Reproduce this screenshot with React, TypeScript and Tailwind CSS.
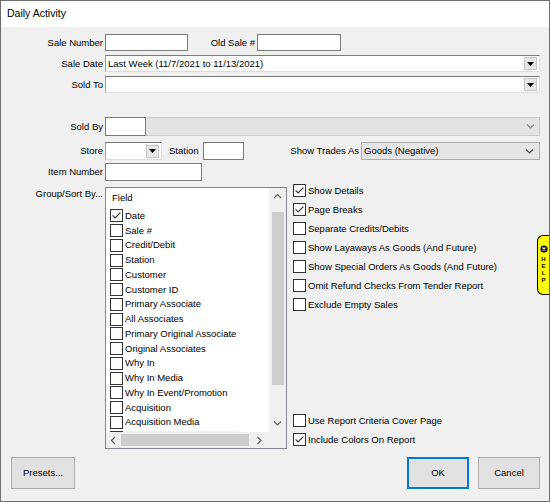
import React from "react"

const items: string[] = [
  "Date",
  "Sale #",
  "Credit/Debit",
  "Station",
  "Customer",
  "Customer ID",
  "Primary Associate",
  "All Associates",
  "Primary Original Associate",
  "Original Associates",
  "Why In",
  "Why In Media",
  "Why In Event/Promotion",
  "Acquisition",
  "Acquisition Media",
  "Acquisition Event",
]

const Check = ({ checked }: { checked?: boolean }) => (
  <svg width="13" height="13" viewBox="0 0 13 13" className="shrink-0">
    <rect x="0.5" y="0.5" width="12" height="12" fill="#ffffff" stroke="#333333" />
    {checked ? <path d="M2.6 6.4 L5.1 9 L10.4 3.6" fill="none" stroke="#333333" strokeWidth="1.2" /> : null}
  </svg>
)

const DropBtn = () => (
  <div className="w-[13px] h-[13px] mr-[2px] bg-[#e6e6e6] border border-[#c4c4c4] flex items-center justify-center shrink-0">
    <svg width="7" height="4" viewBox="0 0 7 4">
      <path d="M0 0 H7 L3.5 4 Z" fill="#000000" />
    </svg>
  </div>
)

const Chevron = ({ dir = "down", color = "#606060" }: { dir?: string; color?: string }) => {
  const d: { [k: string]: string } = {
    down: "M1 1.5 L4.5 5 L8 1.5",
    up: "M1 5 L4.5 1.5 L8 5",
    left: "M5 1 L1.5 4.5 L5 8",
    right: "M1.5 1 L5 4.5 L1.5 8",
  }
  const vert = dir === "down" || dir === "up"
  return (
    <svg width={vert ? 9 : 7} height={vert ? 7 : 9} viewBox={vert ? "0 0 9 7" : "0 0 7 9"}>
      <path d={d[dir]} fill="none" stroke={color} strokeWidth="1.2" />
    </svg>
  )
}

const Label = ({ text, w = "w-[104px]" }: { text: string; w?: string }) => (
  <div className={`${w} shrink-0 text-right pr-[2px] leading-[12px]`}>{text}</div>
)

const Input = ({ w }: { w: string }) => (
  <div className={`${w} h-full bg-white border border-[#7a7a7a] shrink-0`} />
)

const Combo = ({ text, w }: { text?: string; w: string }) => (
  <div className={`${w} h-full bg-white border border-[#a0a0a0] border-t-[#7a7a7a] border-r-[#dcdcdc] border-b-[#dcdcdc] flex items-center shrink-0`}>
    <div className="flex-1 pl-[2px] leading-[12px] whitespace-nowrap overflow-hidden">{text}</div>
    <DropBtn />
  </div>
)

const Opt = ({ text, checked }: { text: string; checked?: boolean }) => (
  <div className="h-[19px] flex items-center gap-[2px] whitespace-nowrap">
    <Check checked={checked} />
    <span className="leading-[12px]">{text}</span>
  </div>
)

const Button = ({ text, w, primary }: { text: string; w: string; primary?: boolean }) => (
  <div
    className={`${w} h-[32px] flex items-center justify-center bg-[#e1e1e1] ${
      primary ? "border-2 border-[#0078d7]" : "border border-[#adadad]"
    }`}
  >
    {text}
  </div>
)

const App: React.FC = () => {
  return (
    <div className="relative w-[550px] h-[502px] border border-[#6e6e6e] bg-[#f0f0f0] text-black text-[9.5px] font-['Liberation_Sans',Arial,sans-serif] flex flex-col overflow-hidden">
      {/* title */}
      <div className="h-[26px] bg-white flex items-center pl-[6px] text-[10.5px] shrink-0">Daily Activity</div>

      {/* sale number */}
      <div className="flex items-center h-[17px] mt-[7px]">
        <Label text="Sale Number" />
        <Input w="w-[83px]" />
        <Label text="Old Sale #" w="w-[69px]" />
        <Input w="w-[84px]" />
      </div>

      <div className="flex items-center h-[17px] mt-[4px]">
        <Label text="Sale Date" />
        <Combo w="w-[435px]" text="Last Week (11/7/2021 to 11/13/2021)" />
      </div>

      <div className="flex items-center h-[17px] mt-[4px]">
        <Label text="Sold To" />
        <Combo w="w-[435px]" />
      </div>

      <div className="flex items-center h-[19px] mt-[24px]">
        <Label text="Sold By" />
        <div className="w-[41px] h-full bg-white border border-[#7a7a7a] shrink-0" />
        <div className="w-[394px] h-full bg-[#e3e3e3] border border-[#cccccc] border-l-0 flex items-center justify-end pr-[4px]">
          <Chevron color="#8a8a8a" />
        </div>
      </div>

      <div className="flex items-center h-[18px] mt-[6px]">
        <Label text="Store" />
        <Combo w="w-[57px]" />
        <div className="w-[7px] shrink-0" />
        <div className="w-[34px] leading-[12px] shrink-0">Station</div>
        <Input w="w-[41px]" />
        <Label text="Show Trades As" w="w-[117px]" />
        <div className="w-[179px] h-full bg-[#e5e5e5] border border-[#adadad] flex items-center pl-[2px] pr-[5px]">
          <span className="flex-1 leading-[12px]">Goods (Negative)</span>
          <Chevron color="#505050" />
        </div>
      </div>

      <div className="flex items-center h-[18px] mt-[3px]">
        <Label text="Item Number" />
        <Input w="w-[97px]" />
      </div>

      <div className="flex h-[268px]">
        <div className="w-[104px] text-right pr-[2px] pt-[7px] leading-[12px] shrink-0">Group/Sort By...</div>

        <div className="w-[182px] h-[262px] mt-[6px] border border-[#828790] bg-white grid grid-cols-[1fr_17px] grid-rows-[1fr_16px] shrink-0">
          <div className="overflow-hidden pl-[4px]">
            <div className="h-[20.5px] flex items-center pl-[2px] pb-[1px] leading-[12px]">Field</div>
            {items.map((it, i) => (
              <div key={it} className="h-[14.75px] flex items-center gap-[2px] whitespace-nowrap">
                <Check checked={i === 0} />
                <span className={`leading-[12px] ${i === items.length - 1 ? "bg-[#f0f0f0] pr-[40px]" : ""}`}>{it}</span>
              </div>
            ))}
          </div>
          <div className="bg-[#f0f0f0] flex flex-col items-center">
            <div className="h-[17px] flex items-center justify-center">
              <Chevron dir="up" />
            </div>
            <div className="w-[12px] h-[173px] mt-[7px] bg-[#cdcdcd]" />
            <div className="flex-1" />
            <div className="h-[17px] flex items-center justify-center">
              <Chevron dir="down" />
            </div>
          </div>
          <div className="bg-[#f0f0f0] flex items-center">
            <div className="w-[15px] flex justify-center">
              <Chevron dir="left" />
            </div>
            <div className="w-[128px] h-[12px] bg-[#cdcdcd]" />
            <div className="flex-1 flex justify-center">
              <Chevron dir="right" />
            </div>
          </div>
          <div className="bg-[#f0f0f0]" />
        </div>

        <div className="ml-[6px] flex flex-col justify-between h-[268px]">
          <div className="flex flex-col">
            <Opt text="Show Details" checked />
            <Opt text="Page Breaks" checked />
            <Opt text="Separate Credits/Debits" />
            <Opt text="Show Layaways As Goods (And Future)" />
            <Opt text="Show Special Orders As Goods (And Future)" />
            <Opt text="Omit Refund Checks From Tender Report" />
            <Opt text="Exclude Empty Sales" />
          </div>
          <div className="flex flex-col">
            <Opt text="Use Report Criteria Cover Page" />
            <Opt text="Include Colors On Report" checked />
          </div>
        </div>
      </div>

      <div className="flex items-center mt-[8px] pl-[10px] pr-[9px]">
        <Button text="Presets..." w="w-[64px]" />
        <div className="flex-1" />
        <Button text="OK" w="w-[62px]" primary />
        <div className="w-[9px]" />
        <Button text="Cancel" w="w-[62px]" />
      </div>

      {/* help tab */}
      <div className="absolute right-0 top-[234px] w-[12px] h-[60px] bg-[#ffff00] border border-black border-r-0 rounded-l-[6px] flex flex-col items-center pt-[9px]">
        <svg width="8" height="8" viewBox="0 0 8 8">
          <circle cx="4" cy="4" r="3.6" fill="#000000" />
          <path d="M2.5 2.5 L5.5 5.5 M5.5 2.5 L2.5 5.5" stroke="#ffffff" strokeWidth="1.1" />
        </svg>
        <div className="flex flex-col items-center mt-[3px] text-[6px] font-bold leading-[7px]">
          <span>H</span>
          <span>E</span>
          <span>L</span>
          <span>P</span>
        </div>
      </div>
    </div>
  )
}

export default App
